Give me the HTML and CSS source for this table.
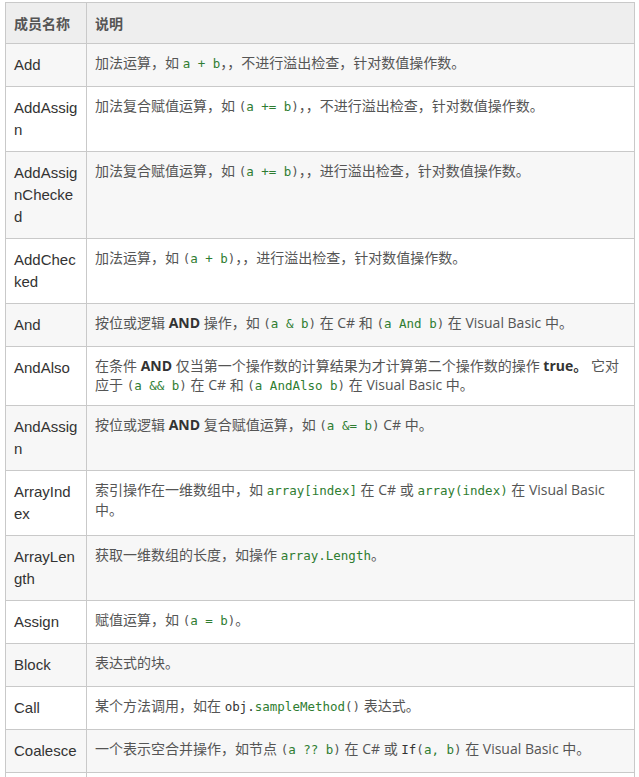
FILE: index.html
```html
<!DOCTYPE html>
<html lang="zh-CN">
<head>
<meta charset="utf-8">
<title>ExpressionType 成员</title>
<link rel="stylesheet" href="styles.css">
</head>
<body>
<div class="wrap">
<table class="members">
  <colgroup><col class="c-name"><col class="c-desc"></colgroup>
  <thead>
    <tr><th>成员名称</th><th>说明</th></tr>
  </thead>
  <tbody>
    <tr><td class="name">Add</td><td class="desc">加法运算，如 <code>a + b</code>，，不进行溢出检查，针对数值操作数。</td></tr>
    <tr><td class="name">AddAssign</td><td class="desc">加法复合赋值运算，如 <code><span class="p">(</span>a += b<span class="p">)</span></code>，，不进行溢出检查，针对数值操作数。</td></tr>
    <tr><td class="name">AddAssignChecked</td><td class="desc">加法复合赋值运算，如 <code><span class="p">(</span>a += b<span class="p">)</span></code>，，进行溢出检查，针对数值操作数。</td></tr>
    <tr><td class="name">AddChecked</td><td class="desc">加法运算，如 <code><span class="p">(</span>a + b<span class="p">)</span></code>，，进行溢出检查，针对数值操作数。</td></tr>
    <tr><td class="name">And</td><td class="desc">按位或逻辑 <b>AND</b> 操作，如 <code><span class="p">(</span>a &amp; b<span class="p">)</span></code> 在 C# 和 <code><span class="p">(</span>a And b<span class="p">)</span></code> 在 Visual Basic 中。</td></tr>
    <tr><td class="name">AndAlso</td><td class="desc">在条件 <b>AND</b> 仅当第一个操作数的计算结果为才计算第二个操作数的操作 <b>true。</b> 它对应于 <code><span class="p">(</span>a &amp;&amp; b<span class="p">)</span></code> 在 C# 和 <code><span class="p">(</span>a AndAlso b<span class="p">)</span></code> 在 Visual Basic 中。</td></tr>
    <tr><td class="name">AndAssign</td><td class="desc">按位或逻辑 <b>AND</b> 复合赋值运算，如 <code><span class="p">(</span>a &amp;= b<span class="p">)</span></code> C# 中。</td></tr>
    <tr><td class="name">ArrayIndex</td><td class="desc">索引操作在一维数组中，如 <code>array[index]</code> 在 C# 或 <code>array(index)</code> 在 Visual Basic 中。</td></tr>
    <tr><td class="name">ArrayLength</td><td class="desc">获取一维数组的长度，如操作 <code>array.Length</code>。</td></tr>
    <tr><td class="name">Assign</td><td class="desc">赋值运算，如 <code><span class="p">(</span>a = b<span class="p">)</span></code>。</td></tr>
    <tr><td class="name">Block</td><td class="desc">表达式的块。</td></tr>
    <tr><td class="name">Call</td><td class="desc">某个方法调用，如在 <code><span class="d">obj.</span>sampleMethod<span class="p">()</span></code> 表达式。</td></tr>
    <tr><td class="name">Coalesce</td><td class="desc">一个表示空合并操作，如节点 <code><span class="p">(</span>a ?? b<span class="p">)</span></code> 在 C# 或 <code><span class="d">If</span><span class="p">(</span>a, b<span class="p">)</span></code> 在 Visual Basic 中。</td></tr>
    <tr><td class="name">Conditional</td><td class="desc">条件运算，如 <code>a &gt; b ? a : b</code> 在 C# 或 <code>If(a &gt; b, a, b)</code> 在 Visual Basic 中。</td></tr>
  </tbody>
</table>
</div>
</body>
</html>
```
FILE: styles.css
```css
html, body {
  margin: 0;
  padding: 0;
  background: #ffffff;
}

.wrap {
  padding: 2px 4px 0 5px;
}

.members {
  width: 630px;
  table-layout: fixed;
  border-collapse: collapse;
  font-family: "Open Sans", "Noto Sans CJK SC", sans-serif;
  color: #444;
}

.c-name { width: 81px; }

.members th,
.members td {
  border: 1px solid #c9c9c9;
  vertical-align: top;
  text-align: left;
  padding: 10px 8px;
}

.members th {
  background: #eeeeee;
  font-family: "Noto Sans CJK SC", sans-serif;
  font-size: 14px;
  line-height: 20px;
  font-weight: 700;
  color: #555;
}

.members tbody tr:nth-child(odd) td {
  background: #f7f7f7;
}

.members td.name {
  font-family: "Liberation Sans", Arial, sans-serif;
  font-size: 15px;
  line-height: 22px;
  color: #333;
  word-break: break-all;
}

.desc {
  font-size: 14px;
  line-height: 18.5px;
  color: #555;
}

.desc b {
  color: #333;
  font-weight: 700;
}

code {
  font-family: "DejaVu Sans Mono", "Liberation Mono", monospace;
  font-size: 12.5px;
  color: #2f7d31;
}

code .p {
  color: #555;
}

code .d {
  color: #333;
}
```
